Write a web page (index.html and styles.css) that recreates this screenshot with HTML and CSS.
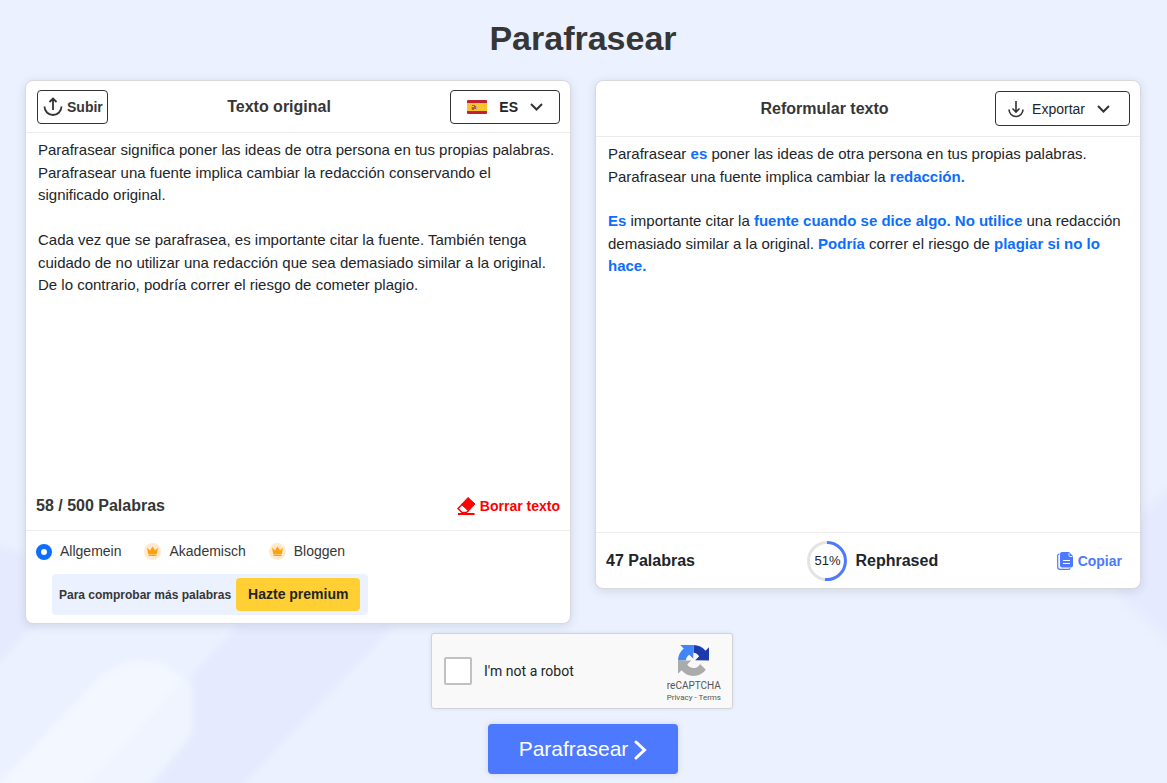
FILE: index.html
```html
<!DOCTYPE html>
<html lang="es">
<head>
    <meta charset="UTF-8">
    <meta name="viewport" content="width=device-width, initial-scale=1.0">
    <title>Parafrasear</title>
    <link rel="stylesheet" href="styles.css">
</head>
<body>
    <main class="page">
        <h1>Parafrasear</h1>

        <div class="panels">
            <!-- Original text -->
            <section class="panel">
                <div class="panel-header">
                    <button type="button" class="btn-outline btn-upload">
                        <svg width="20" height="20" viewBox="0 0 20 20" fill="none" stroke="#333" stroke-width="1.800">
                            <path d="M1.500 9.500a8.500 8.500 0 0 0 17 0M10 13V2M6.500 5L10 1.500 13.500 5"/>
                        </svg>
                        Subir
                    </button>
                    <h2><label for="original">Texto original</label></h2>
                    <button type="button" class="btn-outline btn-lang">
                        <svg width="20" height="14" viewBox="0 0 20 14">
                            <rect width="20" height="14" rx="1" fill="#c0202f"/>
                            <rect y="3" width="20" height="8" fill="#f7c52b"/>
                            <path d="M4 6h1v4H4zM9 6h1v4H9z" fill="#c9a58a"/>
                            <path d="M5 5h3v1H5zM5 7h2v3H5zM7 6h2v3H7z" fill="#b5582f"/>
                        </svg>
                        <span>ES</span>
                        <svg width="13" height="8" viewBox="0 0 13 8" fill="none" stroke="#333" stroke-width="2">
                            <path d="M1 1l5.500 5.500L12 1"/>
                        </svg>
                    </button>
                </div>
                <textarea id="original" class="text-area" spellcheck="false">Parafrasear significa poner las ideas de otra persona en tus propias palabras. Parafrasear una fuente implica cambiar la redacción conservando el significado original.

Cada vez que se parafrasea, es importante citar la fuente. También tenga cuidado de no utilizar una redacción que sea demasiado similar a la original. De lo contrario, podría correr el riesgo de cometer plagio.</textarea>
                <div class="counter">
                    <strong>58 / 500 Palabras</strong>
                    <button type="button" class="btn-clear">
                        <svg width="19" height="18" viewBox="0 0 19 18">
                            <path d="M11 0.500L18 7 11.500 14 4.500 7.500z" fill="#f00" stroke="#f00" stroke-linejoin="round"/>
                            <path d="M5.500 7L1 11.500 5 15.500H9.500L11.500 13.500" fill="none" stroke="#f00" stroke-width="1.500" stroke-linejoin="round"/>
                            <path d="M1 16h16.500v2H1z" fill="#f00"/>
                        </svg>
                        Borrar texto
                    </button>
                </div>
                <div class="modes">
                    <label class="mode"><input type="radio" name="mode" checked>Allgemein</label>
                    <label class="mode">
                        <input type="radio" name="mode" class="locked">
                        <svg width="17" height="17" viewBox="0 0 17 17">
                            <circle cx="8.500" cy="8.500" r="8.500" fill="#ffe9cf"/>
                            <path d="M3 4.500L6 7.500 8.500 3.500 11 7.500 14 4.500 12.800 11H4.200zM4.500 11.500h8V13h-8z" fill="#ffa10a"/>
                        </svg>
                        Akademisch
                    </label>
                    <label class="mode">
                        <input type="radio" name="mode" class="locked">
                        <svg width="17" height="17" viewBox="0 0 17 17">
                            <circle cx="8.500" cy="8.500" r="8.500" fill="#ffe9cf"/>
                            <path d="M3 4.500L6 7.500 8.500 3.500 11 7.500 14 4.500 12.800 11H4.200zM4.500 11.500h8V13h-8z" fill="#ffa10a"/>
                        </svg>
                        Bloggen
                    </label>
                </div>
                <div class="premium">
                    <span>Para comprobar más palabras</span>
                    <a href="#">Hazte premium</a>
                </div>
            </section>

            <!-- Rewritten text -->
            <section class="panel">
                <div class="panel-header header-result">
                    <h2>Reformular texto</h2>
                    <button type="button" class="btn-outline btn-export">
                        <svg width="16" height="18" viewBox="0 0 16 18" fill="none" stroke="#333" stroke-width="1.600">
                            <path d="M1 9.500a7 7 0 0 0 14 0M8 1V12M4.500 8.500L8 12 11.500 8.500"/>
                        </svg>
                        <span>Exportar</span>
                        <svg width="13" height="8" viewBox="0 0 13 8" fill="none" stroke="#333" stroke-width="2">
                            <path d="M1 1l5.500 5.500L12 1"/>
                        </svg>
                    </button>
                </div>
                <div class="text-area text-result">
                    <p>Parafrasear <b>es</b> poner las ideas de otra persona en tus propias palabras. Parafrasear una fuente implica cambiar la <b>redacción.</b></p>
                    <p><b>Es</b> importante citar la <b>fuente cuando se dice algo. No utilice</b> una redacción demasiado similar a la original. <b>Podría</b> correr el riesgo de <b>plagiar si no lo hace.</b></p>
                </div>
                <div class="result-footer">
                    <strong>47 Palabras</strong>
                    <div class="score">
                        <div class="ring">
                            <svg width="40" height="40" viewBox="0 0 40 40" fill="none" stroke-width="3">
                                <circle cx="20" cy="20" r="18.500" stroke="#e4e4e4"/>
                                <path d="M20 1.500a18.500 18.500 0 1 1-2 36.900" stroke="#4d79ff"/>
                            </svg>
                            <span>51%</span>
                        </div>
                        <strong>Rephrased</strong>
                    </div>
                    <button type="button" class="btn-copy">
                        <svg width="16" height="18" viewBox="0 0 16 18">
                            <path d="M2.500 2A1.800 1.800 0 0 0 0.700 4V15a2.300 2.300 0 0 0 2.300 2.300H11a2.500 2.500 0 0 0 2.300-1" fill="none" stroke="#4d79ff" stroke-width="1.200"/>
                            <path d="M5 0h7l4 4v9.500a2 2 0 0 1-2 2H5a2 2 0 0 1-2-2V2a2 2 0 0 1 2-2z" fill="#4d79ff"/>
                            <path d="M12 1v2.500a1 1 0 0 0 1 1h2.500" fill="none" stroke="#fff" stroke-width="0.800"/>
                            <path d="M6 8.500h7M6 11.500h7" stroke="#fff" stroke-width="1.200"/>
                        </svg>
                        Copiar
                    </button>
                </div>
            </section>
        </div>

        <div class="captcha">
            <input type="checkbox" id="robot">
            <label for="robot">I'm not a robot</label>
            <div class="captcha-brand">
                <svg width="31" height="31" viewBox="0 0 64 64">
                    <path fill="#1c3aa9" d="M64 31.955l-.033-1.370V4.687l-7.160 7.160C50.948 4.674 42.033.093 32.050.093L31.900 16.200c5 .4 9.300 3.140 11.828 7.124l-8.307 8.307L64 31.953"/>
                    <path fill="#4285f4" d="M31.862.094l-1.370.033H4.594l7.160 7.160C4.580 13.147 0 22.060 0 32.046L16.100 32c.393-4.976 3.140-9.288 7.124-11.828l8.307 8.307L31.860.095"/>
                    <path fill="#ababab" d="M.001 32.045l.033 1.370v25.898l7.160-7.160c5.860 7.173 14.774 11.754 24.760 11.754 10.400 0 19.622-4.960 25.458-12.640l-11.736-11.860a15.550 15.550 0 0 1-4.754 5.334c-2.050 1.600-4.952 2.906-8.968 2.906-.485 0-.860-.057-1.135-.163-4.976-.393-9.288-3.140-11.828-7.124l8.307-8.307c-10.522.040-22.400.066-27.295-.005"/>
                </svg>
                <span>reCAPTCHA</span>
                <div class="captcha-links"><a href="#">Privacy</a> - <a href="#">Terms</a></div>
            </div>
        </div>

        <button type="submit" class="btn-submit">
            Parafrasear
            <svg width="13" height="22" viewBox="0 0 13 22" fill="none" stroke="#fff" stroke-width="3" stroke-linecap="round">
                <path d="M2 4l8.500 8L2 20"/>
            </svg>
        </button>
    </main>
</body>
</html>
```
FILE: styles.css
```css
* {
    box-sizing: border-box;
}

body {
    margin: 0;
    font-family: "Liberation Sans", Arial, sans-serif;
    font-size: 15px;
    line-height: 1.5;
    color: #212529;
    background-color: #ebf1fe;
    background-image: url("data:image/svg+xml,%3Csvg xmlns='http://www.w3.org/2000/svg' width='400' height='300'%3E%3Cfilter id='b'%3E%3CfeGaussianBlur stdDeviation='3'/%3E%3C/filter%3E%3Cg filter='url(%23b)'%3E%3Cpath d='M-9 60L60 80V115L-9 187z' fill='%23e5eafe'/%3E%3Cpath d='M240 141L192 192V252L145 310H235L395 141z' fill='%23e5eafe'/%3E%3Cpath d='M-10 310L100 194Q130 170 165 182L192 200V252L145 310z' fill='%23eff4fe'/%3E%3Cpath d='M-10 310L100 194Q130 170 165 182L184 196L80 310z' fill='%23f3f7ff'/%3E%3C/g%3E%3C/svg%3E"),
        url("data:image/svg+xml,%3Csvg xmlns='http://www.w3.org/2000/svg' width='60' height='300'%3E%3Cfilter id='b' x='-1' width='3'%3E%3CfeGaussianBlur stdDeviation='6'/%3E%3C/filter%3E%3Cpath d='M80 -5L10 45V110L80 175z' fill='%23e5eafe' filter='url(%23b)'/%3E%3C/svg%3E");
    background-position: left bottom, right 483px;
    background-repeat: no-repeat;
}

h1, h2, p {
    margin: 0;
}

h1 {
    font-size: 34px;
    line-height: 44px;
    color: #363636;
}

h2 {
    font-size: 16px;
    line-height: 24px;
    color: #363636;
}

button {
    font-family: inherit;
    cursor: pointer;
}

a {
    color: inherit;
    text-decoration: none;
}

strong {
    font-size: 16px;
}

.page {
    display: flex;
    flex-direction: column;
    align-items: center;
    padding: 16px 26px 9px 25px;
}

.panels {
    display: grid;
    grid-template-columns: 1fr 1fr;
    align-items: start;
    gap: 24px;
    width: 100%;
    margin-top: 20px;
}

.panel {
    background-color: #fff;
    border: 1px solid #d9d9dc;
    border-radius: 8px;
    box-shadow: 0 2px 10px rgba(60, 70, 110, 0.15);
}

.panel-header {
    display: flex;
    justify-content: space-between;
    align-items: center;
    padding: 9px 10px 8px 11px;
    border-bottom: 1px solid #ececec;
}

.header-result {
    padding: 10px 10px 10px 58px;
}

.header-result h2 {
    flex: 1;
    text-align: center;
}

/* Buttons in the panel headers */
.btn-outline {
    display: flex;
    align-items: center;
    padding: 0 5px;
    height: 34px;
    background-color: #fff;
    border: 1px solid #333;
    border-radius: 4px;
    color: #212529;
}

.btn-upload {
    gap: 4px;
    padding: 0 4px 0 5px;
    font-size: 14px;
    font-weight: bold;
    color: #363636;
}

.btn-lang {
    gap: 12px;
    padding: 0 16px;
    font-size: 14px;
    font-weight: bold;
}

.btn-export {
    gap: 8px;
    height: 35px;
    padding: 0 19px 0 12px;
    font-size: 14px;
}

.btn-export span {
    margin-right: 4px;
}

.text-area {
    display: block;
    width: 100%;
    height: 348px;
    padding: 6px 12px;
    border: 0;
    resize: none;
    outline: none;
    background: transparent;
    font: inherit;
    color: inherit;
}

.text-result {
    height: 395px;
}

.text-result p + p {
    margin-top: 22px;
}

.text-result b {
    color: #0d6efd;
}

.counter {
    display: flex;
    justify-content: space-between;
    align-items: center;
    height: 50px;
    padding: 0 10px;
    border-bottom: 1px solid #ececec;
    color: #363636;
}

.btn-clear,
.btn-copy {
    display: flex;
    align-items: center;
    gap: 4px;
    padding: 0;
    border: 0;
    background: none;
    font-size: 14px;
    font-weight: bold;
}

.btn-clear {
    color: #f00;
}

.btn-copy {
    gap: 5px;
    color: #4d79ff;
}

/* Writing modes */
.modes {
    display: flex;
    gap: 23px;
    height: 41px;
    padding: 0 10px;
}

.mode {
    display: flex;
    align-items: center;
    gap: 8px;
    font-size: 14px;
    color: #363636;
}

.mode input {
    appearance: none;
    width: 16px;
    height: 16px;
    margin: 0;
    border: 5px solid #0d6efd;
    border-radius: 50%;
}

.mode .locked {
    display: none;
}

.premium {
    display: flex;
    align-items: center;
    gap: 5px;
    width: fit-content;
    margin: 2px 26px 8px;
    padding: 4px 8px 4px 7px;
    background-color: #ebf1fe;
    border-radius: 4px;
    font-size: 12px;
    font-weight: bold;
    color: #363636;
}

.premium a {
    padding: 0 12px;
    background-color: #ffcf33;
    border-radius: 4px;
    font-size: 14px;
    line-height: 33px;
    color: #212529;
}

.result-footer {
    display: flex;
    justify-content: space-between;
    align-items: center;
    height: 56px;
    padding: 0 18px 0 10px;
    border-top: 1px solid #ececec;
}

.score {
    display: flex;
    align-items: center;
    gap: 8px;
    margin-right: 6px;
}

.ring {
    display: grid;
    place-items: center;
    font-size: 13px;
}

.ring > * {
    grid-area: 1 / 1;
}

.captcha {
    display: flex;
    align-items: center;
    width: 302px;
    height: 76px;
    margin-top: 9px;
    margin-right: 2px;
    padding: 0 11px 0 12px;
    background-color: #f9f9f9;
    border: 1px solid #d3d3d3;
    border-radius: 3px;
    box-shadow: 0 0 4px rgba(0, 0, 0, 0.08);
    font-family: Roboto, sans-serif;
    font-size: 14px;
}

.captcha input {
    appearance: none;
    width: 28px;
    height: 28px;
    margin: 0 12px 0 0;
    background-color: #fff;
    border: 2px solid #c1c1c1;
    border-radius: 2px;
}

.captcha-brand {
    display: flex;
    flex-direction: column;
    align-items: center;
    margin-left: auto;
    padding-top: 6px;
    font-size: 10px;
    line-height: 12px;
    color: #555;
}

.captcha-brand span {
    margin-top: 4px;
}

.captcha-links {
    font-size: 8px;
}

.btn-submit {
    display: flex;
    justify-content: center;
    align-items: center;
    gap: 6px;
    height: 50px;
    margin-top: 15px;
    padding: 0 31px;
    background-color: #4d79ff;
    border: 0;
    border-radius: 4px;
    box-shadow: 0 0 6px rgba(60, 70, 110, 0.15);
    font-size: 21px;
    color: #fff;
}
```
